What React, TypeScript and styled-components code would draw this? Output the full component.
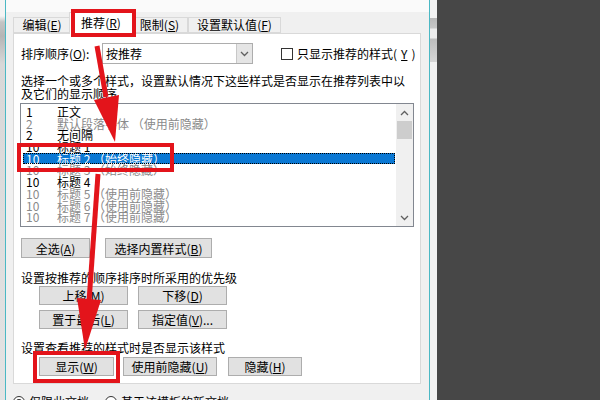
import React from "react";
import styled, { createGlobalStyle } from "styled-components";

const GlobalStyle = createGlobalStyle`
  html, body {
    margin: 0;
    padding: 0;
    background: #474747;
  }
  body {
    font-family: "Noto Sans CJK SC", "Microsoft YaHei", sans-serif;
    font-size: 12px;
    color: #000;
  }
`;

const Page = styled.div`
  position: relative;
  display: flex;
  width: 600px;
  height: 400px;
  overflow: hidden;
  background: #474747;
`;

const LeftStrip = styled.div`
  width: 5px;
  flex-shrink: 0;
  background: linear-gradient(#f4f4f4 0, #f4f4f4 16px, #c4c4c4 22px, #b5b5b5 36px, #d8d8d8 64px, #e3e3e3 100%);
`;

const Dialog = styled.div`
  width: 423px;
  flex-shrink: 0;
  display: flex;
  flex-direction: column;
  overflow: hidden;
  background: #f0f0f0;
  border-left: 1px solid #4bb8c4;
  border-right: 1px solid #4bb8c4;
`;

const TopStrip = styled.div`
  height: 12px;
  flex-shrink: 0;
  background: #fafafa;
`;

const Body = styled.div`
  flex-shrink: 0;
  padding-left: 7px;
`;

const TabRow = styled.div`
  display: flex;
  align-items: flex-end;
  height: 21px;
`;

const Tab = styled.div<{ $active?: boolean; $w: number }>`
  position: relative;
  box-sizing: border-box;
  width: ${(p) => p.$w}px;
  height: ${(p) => (p.$active ? 22 : 16)}px;
  margin: ${(p) => (p.$active ? "0 -2px -1px" : "0")};
  z-index: ${(p) => (p.$active ? 2 : 1)};
  display: flex;
  align-items: center;
  justify-content: center;
  border: 1px solid #d9d9d9;
  border-bottom: ${(p) => (p.$active ? "none" : "1px solid #d9d9d9")};
  background: ${(p) => (p.$active ? "#fff" : "#f0f0f0")};
  line-height: 14px;
  padding-bottom: ${(p) => (p.$active ? 1 : 0)}px;
`;

const Panel = styled.div`
  position: relative;
  z-index: 1;
  box-sizing: border-box;
  width: 408px;
  height: 351px;
  background: #fff;
  border: 1px solid #d9d9d9;
  padding: 9px 0 0 7px;
`;

const SortRow = styled.div`
  display: flex;
  align-items: center;
  height: 21px;
`;

const Label = styled.span`
  width: 81px;
  white-space: nowrap;
`;

const Combo = styled.div`
  box-sizing: border-box;
  width: 151px;
  height: 21px;
  display: flex;
  border: 1px solid #adadad;
  background: #fff;
`;

const ComboText = styled.div`
  flex: 1;
  padding-left: 3px;
  line-height: 19px;
`;

const ComboButton = styled.div`
  width: 15px;
  display: flex;
  align-items: center;
  justify-content: center;
  background: #e5e5e5;
  border-left: 1px solid #c8c8c8;
`;

const CheckLabel = styled.label`
  display: flex;
  align-items: center;
  margin-left: 28px;
  gap: 4px;
  white-space: nowrap;
`;

const Box = styled.span<{ $round?: boolean }>`
  box-sizing: border-box;
  width: 12px;
  height: 12px;
  border: 1px solid #333;
  border-radius: ${(p) => (p.$round ? "50%" : "0")};
  background: #fff;
  display: inline-flex;
  align-items: center;
  justify-content: center;
`;

const Dot = styled.span`
  width: 6px;
  height: 6px;
  border-radius: 50%;
  background: #333;
`;

const Desc = styled.p`
  margin: 10px 0 0;
  line-height: 13px;
  white-space: nowrap;
`;

const List = styled.div`
  box-sizing: border-box;
  display: flex;
  margin: 3px 0 0 -1px;
  width: 394px;
  height: 124px;
  border: 1px solid #828790;
  background: #fff;
`;

const Rows = styled.div`
  flex: 1;
  padding-top: 2px;
  overflow: hidden;
`;

const Row = styled.div<{ $dim?: boolean; $sel?: boolean }>`
  display: grid;
  grid-template-columns: 31px 1fr;
  height: 11.7px;
  line-height: 11.7px;
  padding-left: ${(p) => (p.$sel ? 3 : 5)}px;
  margin: ${(p) => (p.$sel ? "0 1px 0 2px" : "0")};
  white-space: nowrap;
  color: ${(p) => (p.$sel ? "#fff" : p.$dim ? "#8a8a8a" : "#000")};
  background: ${(p) => (p.$sel ? "#0a78d4" : "transparent")};
  outline: ${(p) => (p.$sel ? "1px dotted #000" : "none")};
  outline-offset: -1px;
`;

const ScrollBar = styled.div`
  width: 17px;
  display: flex;
  flex-direction: column;
  background: #f0f0f0;
`;

const ScrollArrow = styled.div`
  height: 17px;
  display: flex;
  align-items: center;
  justify-content: center;
`;

const Thumb = styled.div`
  height: 18px;
  margin: 0 1px;
  background: #cdcdcd;
`;

const Spacer = styled.div`
  flex: 1;
`;

const ButtonRow = styled.div<{ $top: number; $indent?: number }>`
  display: flex;
  margin-top: ${(p) => p.$top}px;
  margin-left: ${(p) => p.$indent ?? 0}px;
`;

const ButtonGrid = styled.div`
  display: grid;
  grid-template-columns: 89px 89px;
  grid-auto-rows: 19px;
  column-gap: 10px;
  row-gap: 5px;
  margin: 2px 0 0 18px;
`;

const Button = styled.div<{ $w?: number; $h?: number; $ml?: number }>`
  box-sizing: border-box;
  width: ${(p) => (p.$w ? `${p.$w}px` : "auto")};
  height: ${(p) => p.$h ?? 19}px;
  margin-left: ${(p) => p.$ml ?? 0}px;
  display: flex;
  align-items: center;
  justify-content: center;
  background: #e1e1e1;
  border: 1px solid #adadad;
  white-space: nowrap;
`;

const Caption = styled.div<{ $top: number }>`
  margin-top: ${(p) => p.$top}px;
  line-height: 13px;
  white-space: nowrap;
`;

const RadioRow = styled.div`
  display: flex;
  align-items: center;
  margin-top: 9px;
  gap: 4px;
  white-space: nowrap;
`;

const RadioGap = styled.span`
  width: 8px;
`;

const RightGutter = styled.div`
  width: 7px;
  flex-shrink: 0;
  background: #f2f2f2;
`;

const GutterBlock = styled.div`
  margin-top: 18px;
  height: 44px;
  background: linear-gradient(#b8b8b8 0, #c6c6c6 10px, #ececec 11px, #ececec 20px, #bdbdbd 21px, #d6d6d6 100%);
`;

const Overlay = styled.svg`
  position: absolute;
  left: 0;
  top: 0;
  pointer-events: none;
  z-index: 10;
`;

const Key = ({ k }: { k: string }) => (
  <>
    (<u>{k}</u>)
  </>
);

const Chevron = ({ up }: { up?: boolean }) => (
  <svg width="9" height="6" viewBox="0 0 9 6">
    <polyline
      points={up ? "1,5 4.5,1.5 8,5" : "1,1 4.5,4.5 8,1"}
      fill="none"
      stroke="#606060"
      strokeWidth="1.3"
    />
  </svg>
);

const rows = [
  { n: "1", t: "正文" },
  { n: "2", t: "默认段落字体 （使用前隐藏）", dim: true },
  { n: "2", t: "无间隔" },
  { n: "10", t: "标题 1" },
  { n: "10", t: "标题 2 （始终隐藏）", sel: true },
  { n: "10", t: "标题 3 （始终隐藏）", dim: true },
  { n: "10", t: "标题 4" },
  { n: "10", t: "标题 5 （使用前隐藏）", dim: true },
  { n: "10", t: "标题 6 （使用前隐藏）", dim: true },
  { n: "10", t: "标题 7 （使用前隐藏）", dim: true },
];

const RED = "#e3141b";

const App = () => {
  return (
    <Page>
      <GlobalStyle />
      <LeftStrip />
      <Dialog>
        <TopStrip />
        <Body>
          <TabRow>
            <Tab $w={58}>
              编辑<Key k="E" />
            </Tab>
            <Tab $w={64} $active>
              推荐<Key k="R" />
            </Tab>
            <Tab $w={57}>
              限制<Key k="S" />
            </Tab>
            <Tab $w={93}>
              设置默认值<Key k="F" />
            </Tab>
          </TabRow>
          <Panel>
            <SortRow>
              <Label>
                排序顺序<Key k="O" />:
              </Label>
              <Combo>
                <ComboText>按推荐</ComboText>
                <ComboButton>
                  <Chevron />
                </ComboButton>
              </Combo>
              <CheckLabel>
                <Box />
                只显示推荐的样式<Key k="Y" />
              </CheckLabel>
            </SortRow>
            <Desc>
              选择一个或多个样式，设置默认情况下这些样式是否显示在推荐列表中以
              <br />
              及它们的显示顺序
            </Desc>
            <List>
              <Rows>
                {rows.map((r, i) => (
                  <Row key={i} $dim={r.dim} $sel={r.sel}>
                    <span>{r.n}</span>
                    <span>{r.t}</span>
                  </Row>
                ))}
              </Rows>
              <ScrollBar>
                <ScrollArrow>
                  <Chevron up />
                </ScrollArrow>
                <Thumb />
                <Spacer />
                <ScrollArrow>
                  <Chevron />
                </ScrollArrow>
              </ScrollBar>
            </List>
            <ButtonRow $top={11}>
              <Button $w={69} $h={20}>
                全选<Key k="A" />
              </Button>
              <Button $w={107} $h={20} $ml={15}>
                选择内置样式<Key k="B" />
              </Button>
            </ButtonRow>
            <Caption $top={13}>设置按推荐的顺序排序时所采用的优先级</Caption>
            <ButtonGrid>
              <Button>
                上移<Key k="M" />
              </Button>
              <Button>
                下移<Key k="D" />
              </Button>
              <Button>
                置于最后<Key k="L" />
              </Button>
              <Button>
                指定值<Key k="V" />...
              </Button>
            </ButtonGrid>
            <Caption $top={12}>设置查看推荐的样式时是否显示该样式</Caption>
            <ButtonRow $top={3} $indent={18}>
              <Button $w={75}>
                显示<Key k="W" />
              </Button>
              <Button $w={94} $ml={9}>
                使用前隐藏<Key k="U" />
              </Button>
              <Button $w={74} $ml={11}>
                隐藏<Key k="H" />
              </Button>
            </ButtonRow>
          </Panel>
          <RadioRow>
            <Box $round>
              <Dot />
            </Box>
            仅限此文档
            <RadioGap />
            <Box $round />
            基于该模板的新文档
          </RadioRow>
        </Body>
      </Dialog>
      <RightGutter>
        <GutterBlock />
      </RightGutter>
      <Overlay width="600" height="400" viewBox="0 0 600 400">
        <rect x="73" y="11" width="61" height="24" fill="none" stroke={RED} strokeWidth="4" />
        <rect x="19" y="145" width="153" height="25" fill="none" stroke={RED} strokeWidth="4" />
        <rect x="35" y="353" width="83" height="28" fill="none" stroke={RED} strokeWidth="4" />
        <line x1="97" y1="46" x2="106" y2="97" stroke={RED} strokeWidth="5" />
        <polygon points="94,100 119,95 115,142" fill={RED} />
        <line x1="98" y1="174" x2="89" y2="302" stroke={RED} strokeWidth="5" />
        <polygon points="77,298 101,300 85,350" fill={RED} />
      </Overlay>
    </Page>
  );
};

export default App;
